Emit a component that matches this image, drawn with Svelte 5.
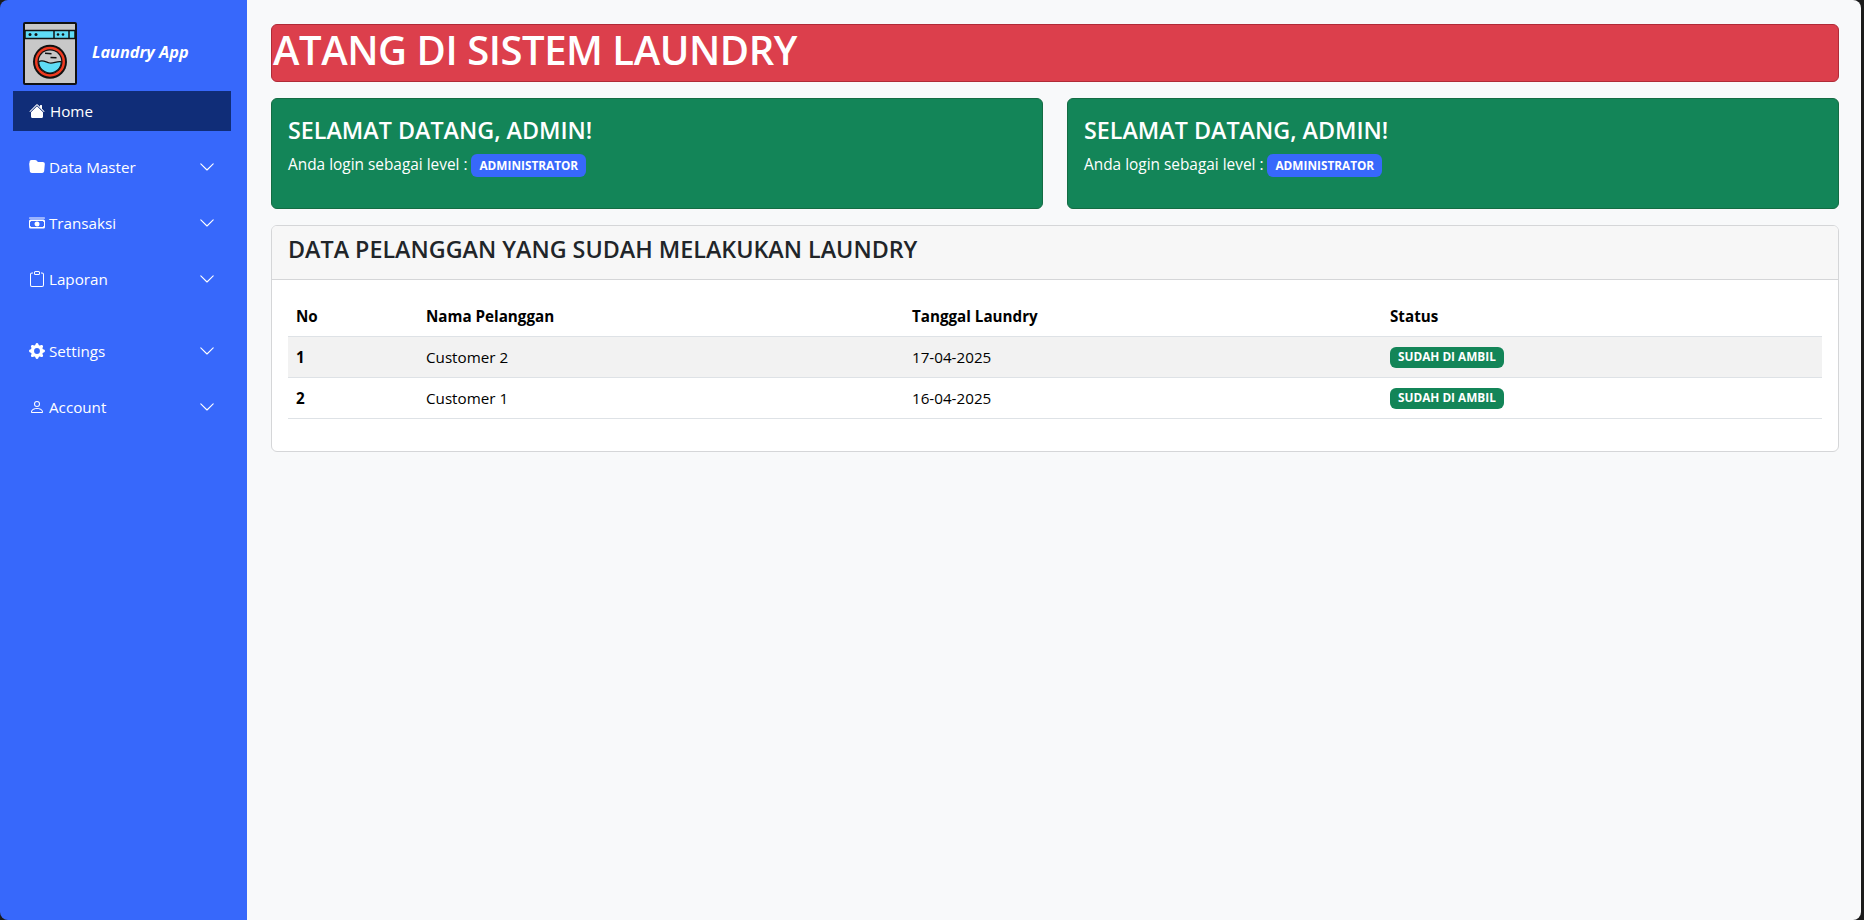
<script>
    const menu = [
        { label: "Data Master", icon: "folder" },
        { label: "Transaksi", icon: "cash" },
        { label: "Laporan", icon: "clipboard" },
        { label: "Settings", icon: "gear", gap: true },
        { label: "Account", icon: "person" },
    ];
    const rows = [
        { no: 1, nama: "Customer 2", tanggal: "17-04-2025" },
        { no: 2, nama: "Customer 1", tanggal: "16-04-2025" },
    ];
</script>

{#snippet welcome()}
    <div class="welcome">
        <h4>SELAMAT DATANG, ADMIN!</h4>
        <p>Anda login sebagai level : <span class="badge blue">ADMINISTRATOR</span></p>
    </div>
{/snippet}

<div class="page">
    <aside class="sidebar">
        <div class="brand">
            <svg class="logo" viewBox="0 0 54 63" width="54" height="63">
                <rect x="1" y="1" width="52" height="61" rx="1" fill="#c8c8c8" stroke="#111" stroke-width="2" />
                <rect x="2" y="8.500" width="50" height="8" fill="#5fdcf6" stroke="#111" stroke-width="1.500" />
                <path d="M31 8.500v8M46 8.500v8" stroke="#111" stroke-width="1.500" />
                <circle cx="7" cy="12.500" r="1.500" fill="#111" />
                <circle cx="13" cy="12.500" r="1.500" fill="#111" />
                <circle cx="35" cy="12.500" r="1.300" fill="#111" />
                <circle cx="40" cy="12.500" r="1.300" fill="#111" />
                <circle cx="27" cy="39.700" r="17" fill="#111" />
                <circle cx="27" cy="39.700" r="15" fill="#f03a20" />
                <circle cx="27" cy="39.700" r="12.500" fill="#111" />
                <circle cx="27" cy="39.700" r="11.300" fill="#c8c8c8" />
                <path d="M15.700 39.700c4-2.500 7 .5 11 1.300s7-2.300 11.600-1.300a11.300 11.300 0 0 1-22.600 0z" fill="#5fdcf6" stroke="#111" stroke-width="1.200" />
                <path d="M22 31.200l6.500.6M27.500 35.500l6 .3" stroke="#111" stroke-width="1.500" />
            </svg>
            <span class="brand-name">Laundry App</span>
        </div>
        <a class="home" href="#home">
            <svg class="icon" viewBox="0 0 16 16" fill="#fff">
                <path d="M8.707 1.500a1 1 0 0 0-1.414 0L.646 8.146a.5.5 0 0 0 .708.708L8 2.207l6.646 6.647a.5.5 0 0 0 .708-.708L13 5.793V2.500a.5.5 0 0 0-.5-.5h-1a.5.5 0 0 0-.5.500v1.293z" />
                <path d="m8 3.293 6 6V13.500a1.500 1.500 0 0 1-1.500 1.500h-9A1.500 1.500 0 0 1 2 13.500V9.293z" />
            </svg>
            Home
        </a>
        <nav>
            {#each menu as item}
                <a class="item" class:gap={item.gap} href="#menu">
                    <svg class="icon" viewBox="0 0 16 16" fill="#fff">
                        {#if item.icon === "folder"}
                            <path d="M9.828 3h3.982a2 2 0 0 1 1.992 2.181l-.637 7A2 2 0 0 1 13.174 14H2.825a2 2 0 0 1-1.991-1.819l-.637-7a2 2 0 0 1 .342-1.310L.5 3a2 2 0 0 1 2-2h3.672a2 2 0 0 1 1.414.586l.828.828A2 2 0 0 0 9.828 3" />
                        {:else if item.icon === "cash"}
                            <path d="M0 3a.5.5 0 0 1 .5-.5h15a.5.5 0 0 1 0 1H.5A.5.5 0 0 1 0 3" />
                            <path fill-rule="evenodd" d="M1.500 4.500h13A1.500 1.500 0 0 1 16 6v6a1.500 1.500 0 0 1-1.500 1.500h-13A1.500 1.500 0 0 1 0 12V6a1.500 1.500 0 0 1 1.500-1.500M2 6a1 1 0 0 1-1 1v4a1 1 0 0 1 1 1h12a1 1 0 0 1 1-1V7a1 1 0 0 1-1-1zm6 .500a2.500 2.500 0 1 1 0 5 2.500 2.500 0 0 1 0-5" />
                        {:else if item.icon === "clipboard"}
                            <path d="M4 1.500H3a2 2 0 0 0-2 2V14a2 2 0 0 0 2 2h10a2 2 0 0 0 2-2V3.500a2 2 0 0 0-2-2h-1v1h1a1 1 0 0 1 1 1V14a1 1 0 0 1-1 1H3a1 1 0 0 1-1-1V3.500a1 1 0 0 1 1-1h1z" />
                            <path d="M9.500 1a.5.5 0 0 1 .5.5v1a.5.5 0 0 1-.5.5h-3a.5.5 0 0 1-.5-.5v-1a.5.5 0 0 1 .5-.5zm-3-1A1.500 1.500 0 0 0 5 1.500v1A1.500 1.500 0 0 0 6.500 4h3A1.500 1.500 0 0 0 11 2.500v-1A1.500 1.500 0 0 0 9.500 0z" />
                        {:else if item.icon === "gear"}
                            <path d="M9.405 1.050c-.413-1.400-2.397-1.400-2.810 0l-.1.340a1.464 1.464 0 0 1-2.105.872l-.310-.170c-1.283-.698-2.686.705-1.987 1.987l.169.311c.446.820.023 1.841-.872 2.105l-.340.100c-1.400.413-1.400 2.397 0 2.810l.340.100a1.464 1.464 0 0 1 .872 2.105l-.170.310c-.698 1.283.705 2.686 1.987 1.987l.311-.169a1.464 1.464 0 0 1 2.105.872l.1.340c.413 1.400 2.397 1.400 2.810 0l.1-.340a1.464 1.464 0 0 1 2.105-.872l.310.170c1.283.698 2.686-.705 1.987-1.987l-.169-.311a1.464 1.464 0 0 1 .872-2.105l.340-.1c1.400-.413 1.400-2.397 0-2.810l-.340-.1a1.464 1.464 0 0 1-.872-2.105l.170-.310c.698-1.283-.705-2.686-1.987-1.987l-.311.169a1.464 1.464 0 0 1-2.105-.872zM8 10.930a2.929 2.929 0 1 1 0-5.860 2.929 2.929 0 0 1 0 5.858z" />
                        {:else}
                            <path d="M8 8a3 3 0 1 0 0-6 3 3 0 0 0 0 6m2-3a2 2 0 1 1-4 0 2 2 0 0 1 4 0m4 8c0 1-1 1-1 1H3s-1 0-1-1 1-4 6-4 6 3 6 4m-1-.004c-.001-.246-.154-.986-.832-1.664C11.516 10.680 10.289 10 8 10s-3.516.680-4.168 1.332c-.678.678-.83 1.418-.832 1.664z" />
                        {/if}
                    </svg>
                    <span class="label">{item.label}</span>
                    <svg class="chevron" viewBox="0 0 16 16" fill="none" stroke="#fff" stroke-width="1.100" stroke-linecap="round" stroke-linejoin="round">
                        <path d="M1.800 4.800 8 11l6.200-6.200" />
                    </svg>
                </a>
            {/each}
        </nav>
    </aside>

    <main>
        <div class="marquee"><span>SELAMAT DATANG DI SISTEM LAUNDRY</span></div>

        <div class="welcome-row">
            {@render welcome()}
            {@render welcome()}
        </div>

        <section class="card">
            <header><h4>DATA PELANGGAN YANG SUDAH MELAKUKAN LAUNDRY</h4></header>
            <div class="card-body">
                <table>
                    <thead>
                        <tr><th class="c1">No</th><th class="c2">Nama Pelanggan</th><th class="c3">Tanggal Laundry</th><th>Status</th></tr>
                    </thead>
                    <tbody>
                        {#each rows as row}
                            <tr>
                                <th>{row.no}</th>
                                <td>{row.nama}</td>
                                <td>{row.tanggal}</td>
                                <td><span class="badge green">SUDAH DI AMBIL</span></td>
                            </tr>
                        {/each}
                    </tbody>
                </table>
            </div>
        </section>
    </main>
</div>

<style>
:global(body) {
    margin: 0;
    background: #1b1b1b;
}

.page {
    display: flex;
    height: 920px;
    overflow: hidden;
    border-radius: 8px;
    font-family: "Open Sans", "Noto Sans", sans-serif;
    font-size: 15.200px;
    color: #212529;
}

.sidebar {
    width: 247px;
    flex: none;
    box-sizing: border-box;
    padding: 22px 16px 0 13px;
    background: #3768fb;
    color: #fff;
}

.brand {
    display: flex;
    align-items: flex-start;
    gap: 15px;
    padding-left: 10px;
    height: 69px;
}

.logo {
    flex: none;
}

.brand-name {
    font-size: 16.300px;
    font-weight: 700;
    font-style: italic;
    margin-top: 19px;
}

.home, .item {
    display: flex;
    align-items: center;
    color: #fff;
    text-decoration: none;
    font-size: 15.200px;
    height: 40px;
}

.home {
    background: #102d78;
    padding-left: 16px;
    gap: 5px;
}

.icon {
    width: 16px;
    height: 16px;
    flex: none;
}

nav {
    display: flex;
    flex-direction: column;
    gap: 16px;
    margin-top: 16px;
}

.item {
    padding: 0 16px;
    gap: 4px;
}

.item.gap {
    margin-top: 16px;
}

.label {
    flex: 1;
}

.chevron {
    width: 16px;
    height: 16px;
}

main {
    flex: 1;
    min-width: 0;
    box-sizing: border-box;
    padding: 24px 22px 0 24px;
    background: #f8f9fa;
    border-radius: 0 8px 8px 0;
    margin-right: 3px;
}

.marquee {
    height: 58px;
    box-sizing: border-box;
    padding-bottom: 7px;
    border: 1px solid #b02a37;
    border-radius: 6px;
    background: #dc3f4c;
    color: #fff;
    overflow: hidden;
    display: flex;
    align-items: center;
    font-size: 40px;
    font-weight: 600;
    letter-spacing: -0.450px;
    white-space: nowrap;
}

.marquee span {
    margin-left: -213px;
}

.welcome-row {
    display: grid;
    grid-template-columns: 1fr 1fr;
    gap: 24px;
    margin-top: 16px;
}

.welcome {
    height: 111px;
    box-sizing: border-box;
    padding: 18px 16px 16px;
    border: 1px solid #146c43;
    border-radius: 6px;
    background: #138558;
    color: #fff;
}

h4 {
    margin: 0;
    font-size: 23.300px;
    font-weight: 600;
    line-height: 1.200;
}

.welcome p {
    margin: 9px 0 0;
    font-size: 15.400px;
}

.badge {
    display: inline-block;
    padding: 4.500px 8px;
    border-radius: 6px;
    color: #fff;
    font-size: 11.800px;
    font-weight: 700;
    line-height: 1;
}

.badge.blue {
    padding: 5.500px 8px;
    background: #3768fb;
}

.badge.green {
    background: #138558;
}

.card {
    margin-top: 16px;
    height: 227px;
    box-sizing: border-box;
    border: 1px solid #d5d6d8;
    border-radius: 6px;
    background: #fff;
    overflow: hidden;
}

.card header {
    height: 54px;
    box-sizing: border-box;
    padding: 10px 16px 0;
    background: #f7f7f7;
    border-bottom: 1px solid #d5d6d8;
}

.card-body {
    padding: 16px;
}

table {
    width: 100%;
    border-collapse: collapse;
    font-size: 15.200px;
    color: #000;
}

th, td {
    height: 41px;
    box-sizing: border-box;
    padding: 0 8px;
    text-align: left;
    border-bottom: 1px solid #dee2e6;
}

thead th {
    height: 40px;
}

th {
    font-weight: 700;
}

.c1 {
    width: 130px;
}

.c2 {
    width: 486px;
}

.c3 {
    width: 478px;
}

tbody tr:nth-child(odd) {
    background: #f2f2f2;
}
</style>
